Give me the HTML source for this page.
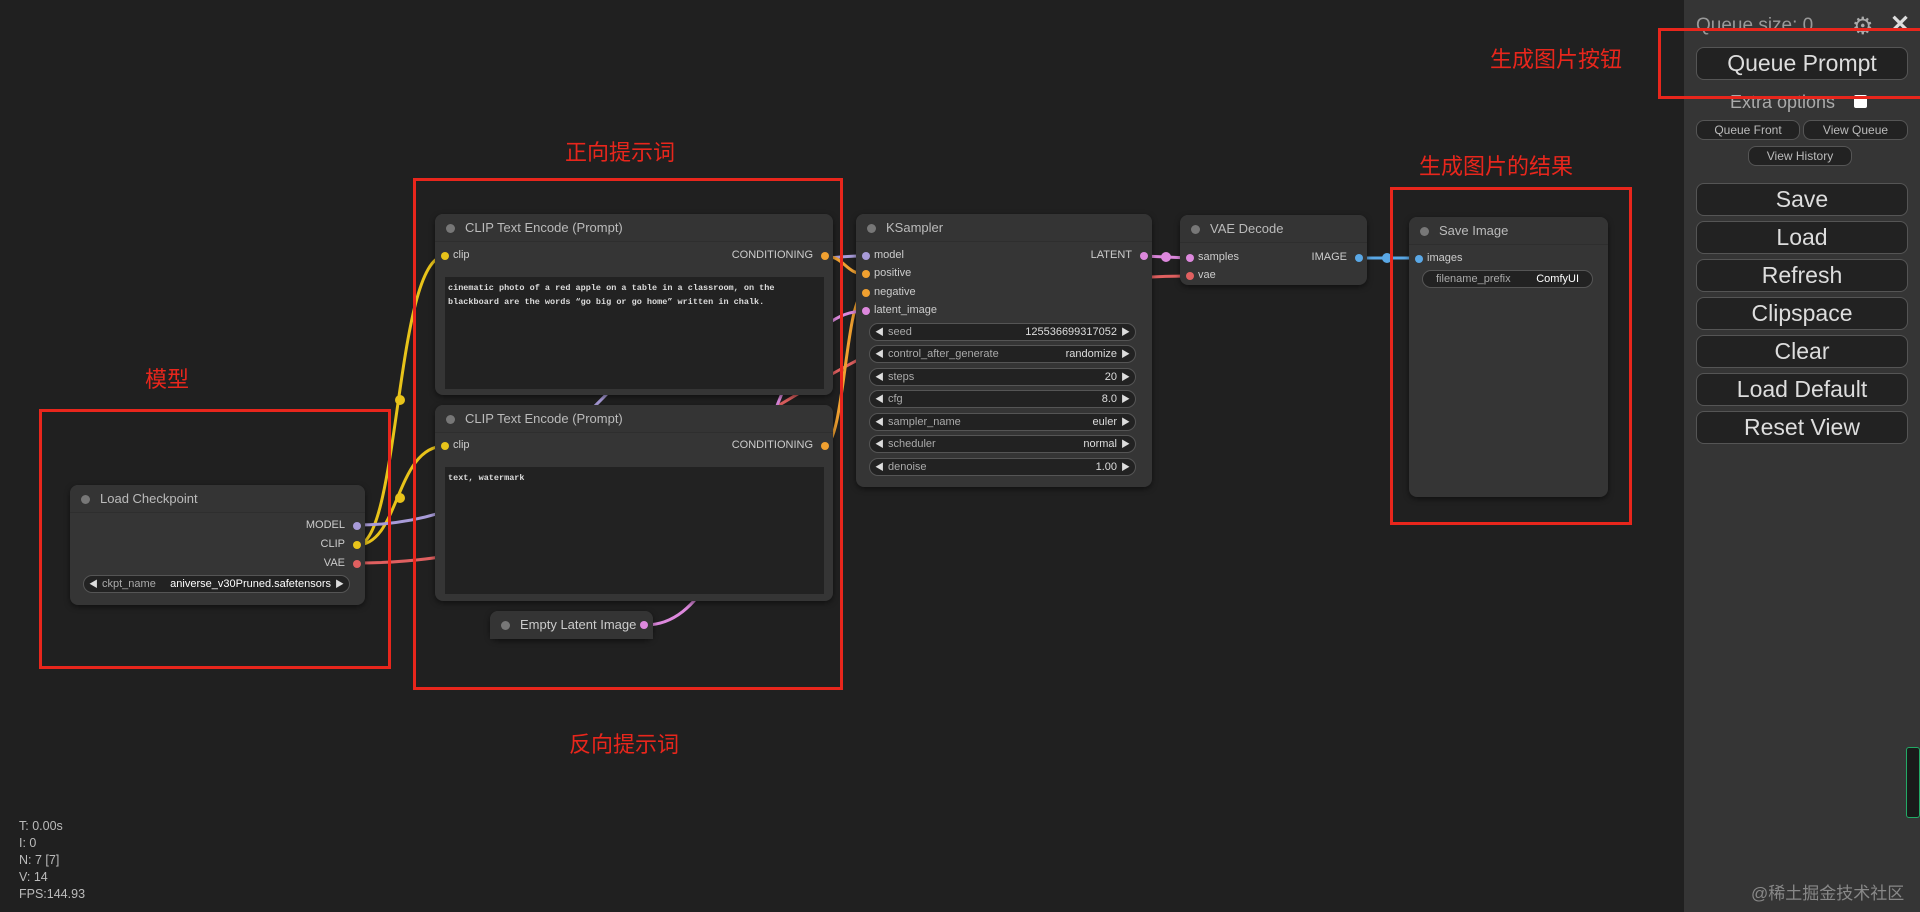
<!DOCTYPE html>
<html><head><meta charset="utf-8">
<style>
*{box-sizing:border-box;margin:0;padding:0}
body{width:1920px;height:912px;overflow:hidden;background:#202020;font-family:"Liberation Sans","Noto Sans CJK SC",sans-serif;position:relative;color:#ccc}
.abs{position:absolute}
.node{position:absolute;background:#353535;border-radius:8px;box-shadow:0 2px 6px rgba(0,0,0,.5)}
.title{height:28px;border-bottom:1px solid #2e2e2e;color:#bbb;font-size:13px;line-height:28px;padding-left:30px;position:relative;background:#343434;border-radius:8px 8px 0 0}
.title:before{content:"";position:absolute;left:11px;top:10px;width:9px;height:9px;border-radius:50%;background:#777}
.slot{position:absolute;font-size:11px;color:#ccc;white-space:nowrap}
.dot{position:absolute;width:8px;height:8px;border-radius:50%}
.ta{position:absolute;background:#222;font-family:"Liberation Mono",monospace;font-size:8.5px;font-weight:bold;color:#ddd;padding:4px 3px;line-height:14px}
.w{position:absolute;height:18px;border:1px solid #555;border-radius:9px;background:#222;font-size:11px;line-height:16px;color:#aaa}
.w .l{position:absolute;left:18px}
.w .v{position:absolute;right:18px;color:#ddd}
.w:before{content:"◀";position:absolute;left:5px;color:#ddd;font-size:9px}
.w:after{content:"▶";position:absolute;right:5px;color:#ddd;font-size:9px}
.w.np:before,.w.np:after{content:""}
.red{position:absolute;border:3px solid #e8261c}
.lab{position:absolute;color:#e8261c;font-size:22px;white-space:nowrap}
.side{position:absolute;left:1684px;top:0;width:236px;height:912px;background:#353535}
.btn{position:absolute;left:12px;width:212px;height:33px;border:1px solid #555;border-radius:8px;background:#222;color:#ddd;font-size:23px;text-align:center;line-height:31px}
.sb{position:absolute;height:20px;border:1px solid #555;border-radius:8px;background:#222;color:#bbb;font-size:12px;text-align:center;line-height:18px}
</style></head><body>

<svg class="abs" style="left:0;top:0" width="1920" height="912">
<g fill="none" stroke-width="3">
<path d="M357 545 C400 545 395 256 445 256" stroke="#e8c31a"/>
<path d="M357 545 C400 545 395 446 445 446" stroke="#e8c31a"/>
<path d="M357 525 C600 525 620 256 865 256" stroke="#a89bd8"/>
<path d="M357 563 C700 563 800 276 1188 276" stroke="#e06060"/>
<path d="M824 256 C845 256 845 274 865 274" stroke="#f0a030"/>
<path d="M824 446 C845 446 845 293 865 293" stroke="#f0a030"/>
<path d="M645 625 C760 625 750 311 865 311" stroke="#dd88dd"/>
<path d="M1143 256 L1189 258" stroke="#dd88dd"/>
<path d="M1357 258 L1418 258" stroke="#5aa8e6"/>
</g>
<circle cx="400" cy="498" r="5" fill="#e8c31a"/><circle cx="400" cy="400" r="5" fill="#e8c31a"/>
<circle cx="1166" cy="257" r="5" fill="#dd88dd"/><circle cx="1387" cy="258" r="5" fill="#5aa8e6"/>
</svg>

<div class="node" style="left:70px;top:485px;width:295px;height:120px">
<div class="title">Load Checkpoint</div>
<div class="slot" style="right:20px;top:34px">MODEL</div><div class="dot" style="right:4px;top:37px;background:#a89bd8"></div>
<div class="slot" style="right:20px;top:53px">CLIP</div><div class="dot" style="right:4px;top:56px;background:#e8c31a"></div>
<div class="slot" style="right:20px;top:72px">VAE</div><div class="dot" style="right:4px;top:75px;background:#e06060"></div>
<div class="w" style="left:13px;top:90px;width:267px"><span class="l">ckpt_name</span><span class="v" style="color:#fff">aniverse_v30Pruned.safetensors</span></div>
</div>

<div class="node" style="left:435px;top:214px;width:398px;height:181px">
<div class="title">CLIP Text Encode (Prompt)</div>
<div class="dot" style="left:6px;top:38px;background:#e8c31a"></div><div class="slot" style="left:18px;top:35px">clip</div>
<div class="slot" style="right:20px;top:35px">CONDITIONING</div><div class="dot" style="right:4px;top:38px;background:#f0a030"></div>
<div class="ta" style="left:10px;top:63px;width:379px;height:112px">cinematic photo of a red apple on a table in a classroom, on the<br>blackboard are the words “go big or go home” written in chalk.</div>
</div>

<div class="node" style="left:435px;top:405px;width:398px;height:196px">
<div class="title">CLIP Text Encode (Prompt)</div>
<div class="dot" style="left:6px;top:37px;background:#e8c31a"></div><div class="slot" style="left:18px;top:34px">clip</div>
<div class="slot" style="right:20px;top:34px">CONDITIONING</div><div class="dot" style="right:4px;top:37px;background:#f0a030"></div>
<div class="ta" style="left:10px;top:62px;width:379px;height:127px">text, watermark</div>
</div>

<div class="node" style="left:490px;top:611px;width:163px;height:28px">
<div class="title" style="border:none;color:#ccc">Empty Latent Image</div>
<div class="dot" style="right:5px;top:10px;background:#dd88dd"></div>
</div>

<div class="node" style="left:856px;top:214px;width:296px;height:273px">
<div class="title">KSampler</div>
<div class="dot" style="left:6px;top:38px;background:#a89bd8"></div><div class="slot" style="left:18px;top:35px">model</div>
<div class="slot" style="right:20px;top:35px">LATENT</div><div class="dot" style="right:4px;top:38px;background:#dd88dd"></div>
<div class="dot" style="left:6px;top:56px;background:#f0a030"></div><div class="slot" style="left:18px;top:53px">positive</div>
<div class="dot" style="left:6px;top:75px;background:#f0a030"></div><div class="slot" style="left:18px;top:72px">negative</div>
<div class="dot" style="left:6px;top:93px;background:#dd88dd"></div><div class="slot" style="left:18px;top:90px">latent_image</div>
<div class="w" style="left:13px;top:109px;width:267px"><span class="l">seed</span><span class="v">125536699317052</span></div>
<div class="w" style="left:13px;top:131px;width:267px"><span class="l">control_after_generate</span><span class="v">randomize</span></div>
<div class="w" style="left:13px;top:154px;width:267px"><span class="l">steps</span><span class="v">20</span></div>
<div class="w" style="left:13px;top:176px;width:267px"><span class="l">cfg</span><span class="v">8.0</span></div>
<div class="w" style="left:13px;top:199px;width:267px"><span class="l">sampler_name</span><span class="v">euler</span></div>
<div class="w" style="left:13px;top:221px;width:267px"><span class="l">scheduler</span><span class="v">normal</span></div>
<div class="w" style="left:13px;top:244px;width:267px"><span class="l">denoise</span><span class="v">1.00</span></div>
</div>

<div class="node" style="left:1180px;top:215px;width:187px;height:70px">
<div class="title">VAE Decode</div>
<div class="dot" style="left:6px;top:39px;background:#dd88dd"></div><div class="slot" style="left:18px;top:36px">samples</div>
<div class="slot" style="right:20px;top:36px">IMAGE</div><div class="dot" style="right:4px;top:39px;background:#5aa8e6"></div>
<div class="dot" style="left:6px;top:57px;background:#e06060"></div><div class="slot" style="left:18px;top:54px">vae</div>
</div>

<div class="node" style="left:1409px;top:217px;width:199px;height:280px">
<div class="title">Save Image</div>
<div class="dot" style="left:6px;top:38px;background:#5aa8e6"></div><div class="slot" style="left:18px;top:35px">images</div>
<div class="w np" style="left:13px;top:53px;width:171px"><span class="l" style="left:13px">filename_prefix</span><span class="v" style="right:13px;color:#fff">ComfyUI</span></div>
</div>

<div class="red" style="left:39px;top:409px;width:352px;height:260px"></div>
<div class="lab" style="left:145px;top:362px">模型</div>
<div class="red" style="left:413px;top:178px;width:430px;height:512px"></div>
<div class="lab" style="left:565px;top:135px">正向提示词</div>
<div class="lab" style="left:569px;top:727px">反向提示词</div>
<div class="red" style="left:1390px;top:187px;width:242px;height:338px"></div>
<div class="lab" style="left:1419px;top:149px">生成图片的结果</div>

<div class="abs" style="left:19px;top:818px;font-size:12.5px;line-height:17px;color:#bbb">T: 0.00s<br>I: 0<br>N: 7 [7]<br>V: 14<br>FPS:144.93</div>

<div class="side">
<div class="abs" style="left:12px;top:15px;font-size:19px;color:#999">Queue size: 0</div>
<div class="abs" style="left:168px;top:12px;font-size:24px;color:#aaa">⚙</div>
<div class="abs" style="left:206px;top:10px;font-size:24px;color:#ddd;font-weight:bold">✕</div>
<div class="btn" style="top:47px">Queue Prompt</div>
<div class="abs" style="left:46px;top:92px;font-size:18px;color:#aaa">Extra options</div>
<div class="abs" style="left:170px;top:95px;width:13px;height:13px;background:#fff;border-radius:2px"></div>
<div class="sb" style="left:12px;top:120px;width:104px">Queue Front</div>
<div class="sb" style="left:119px;top:120px;width:105px">View Queue</div>
<div class="sb" style="left:64px;top:146px;width:104px">View History</div>
<div class="btn" style="top:183px">Save</div>
<div class="btn" style="top:221px">Load</div>
<div class="btn" style="top:259px">Refresh</div>
<div class="btn" style="top:297px">Clipspace</div>
<div class="btn" style="top:335px">Clear</div>
<div class="btn" style="top:373px">Load Default</div>
<div class="btn" style="top:411px">Reset View</div>
<div class="abs" style="left:222px;top:747px;width:14px;height:71px;background:#1a1a1a;border:1px solid #2a6;border-radius:3px"></div>
<div class="abs" style="left:67px;top:879px;font-size:17px;color:#888">@稀土掘金技术社区</div>
</div>

<div class="red" style="left:1658px;top:28px;width:262px;height:71px;border-right:none"></div>
<div class="lab" style="left:1490px;top:42px">生成图片按钮</div>

</body></html>
